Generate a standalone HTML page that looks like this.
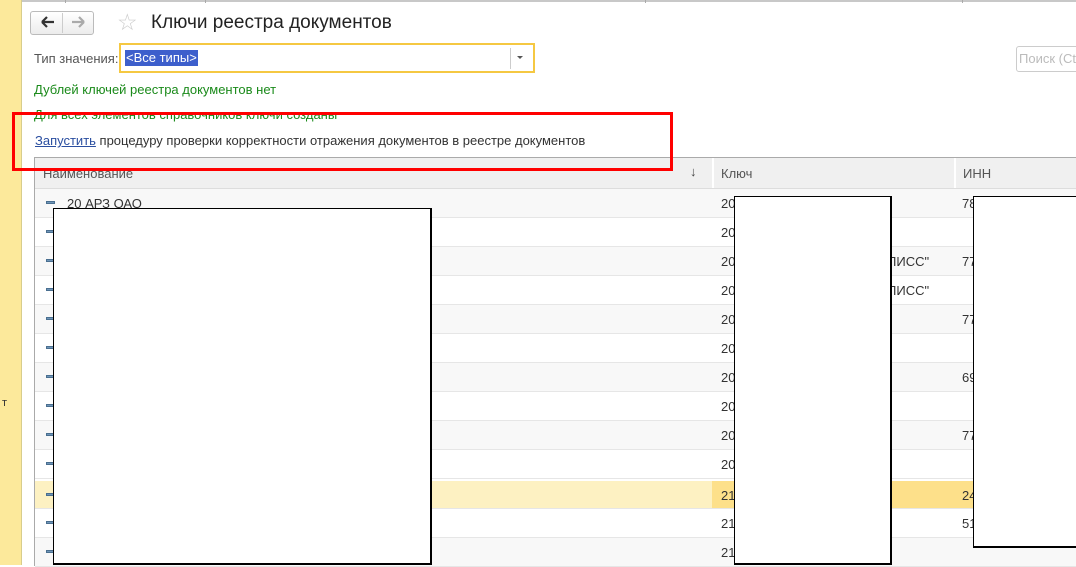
<!DOCTYPE html>
<html><head><meta charset="utf-8"><style>
body{margin:0;width:1076px;height:565px;overflow:hidden;background:#fff;font-family:"Liberation Sans",sans-serif;font-size:13px;color:#333;position:relative}
.a{position:absolute}
.row{position:absolute;left:35px;width:1041px;height:28px;border-bottom:1px solid #e6e6e6}
.ic{position:absolute;left:11px;top:12px;width:9px;height:3px;background:#6f95b8;border:1px solid #4a6f90;box-sizing:border-box}
.t{position:absolute;top:7px;font-size:13px;color:#333}
.blk{position:absolute;background:#fff;border:1px solid #000;border-width:1px 2px 2px 1px}
</style></head><body>
<div class="a" style="left:0;top:0;width:21px;height:565px;background:#fce99b"></div>
<div class="a" style="left:21px;top:0;width:1px;height:565px;background:#d8cd8c"></div>
<div class="a" style="left:2px;top:397px;font-size:11px">т</div>
<div class="a" style="left:22px;top:0;width:1054px;height:2px;background:#c8c8c8"></div>
<div class="a" style="left:65px;top:0;width:1px;height:3px;background:#aaa"></div>
<div class="a" style="left:205px;top:0;width:1px;height:3px;background:#aaa"></div>
<div class="a" style="left:645px;top:0;width:1px;height:3px;background:#aaa"></div>
<div class="a" style="left:962px;top:0;width:1px;height:3px;background:#aaa"></div>
<!-- nav -->
<div class="a" style="left:30px;top:11px;width:64px;height:24px;border:1px solid #bbb;border-radius:3px;background:linear-gradient(#fff,#ececec);box-sizing:border-box"></div>
<div class="a" style="left:62px;top:13px;width:1px;height:20px;background:#ccc"></div>
<svg class="a" style="left:40px;top:15px" width="16" height="14" viewBox="0 0 16 14"><path d="M2 7H14M2 7L7 2M2 7L7 12" stroke="#333" stroke-width="2.2" fill="none"/></svg>
<svg class="a" style="left:70px;top:15px" width="16" height="14" viewBox="0 0 16 14"><path d="M2 7H14M14 7L9 2M14 7L9 12" stroke="#aaa" stroke-width="2.2" fill="none"/></svg>
<div class="a" style="left:117px;top:9px;font-size:23px;color:#ccc">☆</div>
<div class="a" style="left:151px;top:12px;font-size:19px;color:#222">Ключи реестра документов</div>
<div class="a" style="left:34px;top:51px;color:#555">Тип значения:</div>
<div class="a" style="left:119px;top:43px;width:416px;height:30px;border:2px solid #f5c842;box-sizing:border-box"></div>
<div class="a" style="left:125px;top:50px;background:#3d5fcc;color:#fff;padding:0 1px;height:16px;line-height:16px">&lt;Все типы&gt;</div>
<div class="a" style="left:510px;top:48px;width:1px;height:21px;background:#ccc"></div>
<div class="a" style="left:517px;top:56px;border:3px solid transparent;border-top:3px solid #555"></div>
<div class="a" style="left:1016px;top:46px;width:70px;height:24px;border:1px solid #ccc;border-radius:3px"></div>
<div class="a" style="left:1019px;top:51px;color:#bbb">Поиск (Ct</div>
<div class="a" style="left:34px;top:82px;color:#1a8a1a">Дублей ключей реестра документов нет</div>
<div class="a" style="left:34px;top:107px;color:#1a8a1a">Для всех элементов справочников ключи созданы</div>
<div class="a" style="left:35px;top:133px"><span style="color:#2a4ea0;text-decoration:underline">Запустить</span> процедуру проверки корректности отражения документов в реестре документов</div>
<!-- table -->
<div class="a" style="left:34px;top:157px;width:1042px;height:408px;border-left:1px solid #aaa;border-top:1px solid #aaa"></div>
<div class="a" style="left:35px;top:158px;width:1041px;height:30px;background:#f0f0f0;border-bottom:1px solid #ddd"></div>
<div class="a" style="left:712px;top:158px;width:2px;height:30px;background:#fff"></div>
<div class="a" style="left:954px;top:158px;width:2px;height:30px;background:#fff"></div>
<div class="a" style="left:43px;top:166px;color:#555">Наименование</div>
<div class="a" style="left:690px;top:164px;color:#444">↓</div>
<div class="a" style="left:721px;top:166px;color:#555">Ключ</div>
<div class="a" style="left:963px;top:166px;color:#555">ИНН</div>
<div class="row" style="top:189px;background:#f8f8f8"><div class="ic"></div><div class="t" style="left:32px">20 АРЗ ОАО</div><div class="t" style="left:686px">20</div><div class="t" style="left:927px">78</div></div>
<div class="row" style="top:218px"><div class="ic"></div><div class="t" style="left:686px">20</div></div>
<div class="row" style="top:247px;background:#f8f8f8"><div class="ic"></div><div class="t" style="left:686px">20</div><div class="t" style="left:852px">ПИСС"</div><div class="t" style="left:927px">77</div></div>
<div class="row" style="top:276px"><div class="ic"></div><div class="t" style="left:686px">20</div><div class="t" style="left:852px">ПИСС"</div></div>
<div class="row" style="top:305px;background:#f8f8f8"><div class="ic"></div><div class="t" style="left:686px">20</div><div class="t" style="left:927px">77</div></div>
<div class="row" style="top:334px"><div class="ic"></div><div class="t" style="left:686px">20</div></div>
<div class="row" style="top:363px;background:#f8f8f8"><div class="ic"></div><div class="t" style="left:686px">20</div><div class="t" style="left:927px">69</div></div>
<div class="row" style="top:392px"><div class="ic"></div><div class="t" style="left:686px">20</div></div>
<div class="row" style="top:421px;background:#f8f8f8"><div class="ic"></div><div class="t" style="left:686px">20</div><div class="t" style="left:927px">77</div></div>
<div class="row" style="top:450px"><div class="ic"></div><div class="t" style="left:686px">20</div></div>
<div class="row" style="top:481px;background:#fdf1c2;height:27px"><div class="a" style="left:677px;top:0;width:276px;height:27px;background:#fde08a"></div><div class="ic"></div><div class="t" style="left:686px">21</div><div class="t" style="left:927px">24</div></div>
<div class="row" style="top:509px"><div class="ic"></div><div class="t" style="left:686px">21</div><div class="t" style="left:927px">51</div></div>
<div class="row" style="top:538px;background:#f8f8f8"><div class="ic"></div><div class="t" style="left:686px">21</div></div>
<div class="blk" style="left:53px;top:208px;width:376px;height:354px"></div>
<div class="blk" style="left:734px;top:196px;width:155px;height:366px"></div>
<div class="blk" style="left:973px;top:196px;width:105px;height:349px"></div>
<div class="a" style="left:12px;top:112px;width:661px;height:59px;border:3px solid #f00;box-sizing:border-box"></div>
</body></html>
